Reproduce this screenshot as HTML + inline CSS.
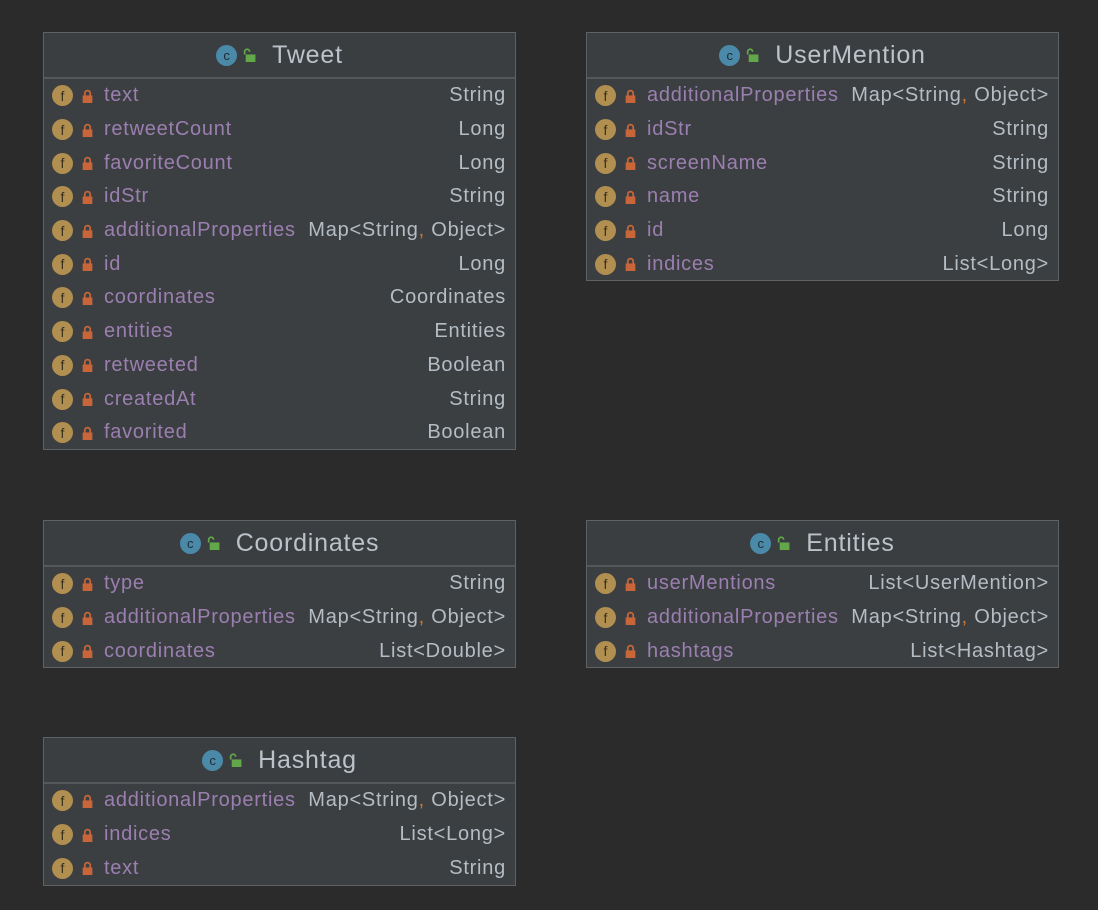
<!DOCTYPE html><html><head><style>
body{margin:0;width:1098px;height:910px;background:#2b2b2b;font-family:"Liberation Sans",sans-serif;position:relative;overflow:hidden}
.b{position:absolute;width:473px;background:#3c3f41;border:1px solid #5f6264;box-sizing:border-box}
.h{height:44px;border-bottom:2px solid #55585a;display:flex;align-items:center;justify-content:center;color:#bbc2c9;font-size:25px;letter-spacing:0.8px;background:#3b3e40}
.c{width:21px;height:21px;border-radius:50%;background:#4a8aa8;color:#1e2a33;font-size:13px;letter-spacing:0;display:inline-flex;align-items:center;justify-content:center;margin-right:6px}
.u{display:inline-block;margin-right:16px}
.r{height:33.7px;display:flex;align-items:center;font-size:20px;letter-spacing:0.75px;position:relative}
.f{width:21px;height:21px;border-radius:50%;background:#b18f50;color:#3a2f1a;font-size:14px;letter-spacing:0;display:inline-flex;align-items:center;justify-content:center;margin-left:8px;margin-right:9px}
.n{color:#9b7fb0;margin-left:11px;flex:1}
.t{color:#b4bcc4;margin-right:9px}
.o{color:#cc7832}
</style></head><body>
<svg width="0" height="0" style="position:absolute"><defs>
<symbol id="lk" viewBox="0 0 10 13"><path d="M2.5 6V4a2.5 2.5 0 0 1 5 0v2" fill="none" stroke="#c8663a" stroke-width="1.6"/><rect x="0.5" y="6" width="9" height="7" fill="#c8663a"/></symbol>
<symbol id="ul" viewBox="0 0 12 13"><path d="M1.5 6V3.5a2.3 2.3 0 0 1 4.6 0" fill="none" stroke="#62a84a" stroke-width="1.6"/><rect x="2.5" y="6" width="9" height="7" fill="#62a84a"/></symbol>
</defs></svg>

<div class="b" style="left:43px;top:32px;height:418px">
<div class="h"><span class="c">c</span><svg class="u" width="13" height="14"><use href="#ul"/></svg>Tweet</div>
<div class="r"><span class="f">f</span><svg width="11" height="14"><use href="#lk"/></svg><span class="n">text</span><span class="t">String</span></div>
<div class="r"><span class="f">f</span><svg width="11" height="14"><use href="#lk"/></svg><span class="n">retweetCount</span><span class="t">Long</span></div>
<div class="r"><span class="f">f</span><svg width="11" height="14"><use href="#lk"/></svg><span class="n">favoriteCount</span><span class="t">Long</span></div>
<div class="r"><span class="f">f</span><svg width="11" height="14"><use href="#lk"/></svg><span class="n">idStr</span><span class="t">String</span></div>
<div class="r"><span class="f">f</span><svg width="11" height="14"><use href="#lk"/></svg><span class="n">additionalProperties</span><span class="t">Map&lt;String<span class="o">,</span> Object&gt;</span></div>
<div class="r"><span class="f">f</span><svg width="11" height="14"><use href="#lk"/></svg><span class="n">id</span><span class="t">Long</span></div>
<div class="r"><span class="f">f</span><svg width="11" height="14"><use href="#lk"/></svg><span class="n">coordinates</span><span class="t">Coordinates</span></div>
<div class="r"><span class="f">f</span><svg width="11" height="14"><use href="#lk"/></svg><span class="n">entities</span><span class="t">Entities</span></div>
<div class="r"><span class="f">f</span><svg width="11" height="14"><use href="#lk"/></svg><span class="n">retweeted</span><span class="t">Boolean</span></div>
<div class="r"><span class="f">f</span><svg width="11" height="14"><use href="#lk"/></svg><span class="n">createdAt</span><span class="t">String</span></div>
<div class="r"><span class="f">f</span><svg width="11" height="14"><use href="#lk"/></svg><span class="n">favorited</span><span class="t">Boolean</span></div>
</div>

<div class="b" style="left:586px;top:32px;height:249px">
<div class="h"><span class="c">c</span><svg class="u" width="13" height="14"><use href="#ul"/></svg>UserMention</div>
<div class="r"><span class="f">f</span><svg width="11" height="14"><use href="#lk"/></svg><span class="n">additionalProperties</span><span class="t">Map&lt;String<span class="o">,</span> Object&gt;</span></div>
<div class="r"><span class="f">f</span><svg width="11" height="14"><use href="#lk"/></svg><span class="n">idStr</span><span class="t">String</span></div>
<div class="r"><span class="f">f</span><svg width="11" height="14"><use href="#lk"/></svg><span class="n">screenName</span><span class="t">String</span></div>
<div class="r"><span class="f">f</span><svg width="11" height="14"><use href="#lk"/></svg><span class="n">name</span><span class="t">String</span></div>
<div class="r"><span class="f">f</span><svg width="11" height="14"><use href="#lk"/></svg><span class="n">id</span><span class="t">Long</span></div>
<div class="r"><span class="f">f</span><svg width="11" height="14"><use href="#lk"/></svg><span class="n">indices</span><span class="t">List&lt;Long&gt;</span></div>
</div>

<div class="b" style="left:43px;top:520px;height:148px">
<div class="h"><span class="c">c</span><svg class="u" width="13" height="14"><use href="#ul"/></svg>Coordinates</div>
<div class="r"><span class="f">f</span><svg width="11" height="14"><use href="#lk"/></svg><span class="n">type</span><span class="t">String</span></div>
<div class="r"><span class="f">f</span><svg width="11" height="14"><use href="#lk"/></svg><span class="n">additionalProperties</span><span class="t">Map&lt;String<span class="o">,</span> Object&gt;</span></div>
<div class="r"><span class="f">f</span><svg width="11" height="14"><use href="#lk"/></svg><span class="n">coordinates</span><span class="t">List&lt;Double&gt;</span></div>
</div>

<div class="b" style="left:586px;top:520px;height:148px">
<div class="h"><span class="c">c</span><svg class="u" width="13" height="14"><use href="#ul"/></svg>Entities</div>
<div class="r"><span class="f">f</span><svg width="11" height="14"><use href="#lk"/></svg><span class="n">userMentions</span><span class="t">List&lt;UserMention&gt;</span></div>
<div class="r"><span class="f">f</span><svg width="11" height="14"><use href="#lk"/></svg><span class="n">additionalProperties</span><span class="t">Map&lt;String<span class="o">,</span> Object&gt;</span></div>
<div class="r"><span class="f">f</span><svg width="11" height="14"><use href="#lk"/></svg><span class="n">hashtags</span><span class="t">List&lt;Hashtag&gt;</span></div>
</div>

<div class="b" style="left:43px;top:737px;height:149px">
<div class="h"><span class="c">c</span><svg class="u" width="13" height="14"><use href="#ul"/></svg>Hashtag</div>
<div class="r"><span class="f">f</span><svg width="11" height="14"><use href="#lk"/></svg><span class="n">additionalProperties</span><span class="t">Map&lt;String<span class="o">,</span> Object&gt;</span></div>
<div class="r"><span class="f">f</span><svg width="11" height="14"><use href="#lk"/></svg><span class="n">indices</span><span class="t">List&lt;Long&gt;</span></div>
<div class="r"><span class="f">f</span><svg width="11" height="14"><use href="#lk"/></svg><span class="n">text</span><span class="t">String</span></div>
</div>
</body></html>
